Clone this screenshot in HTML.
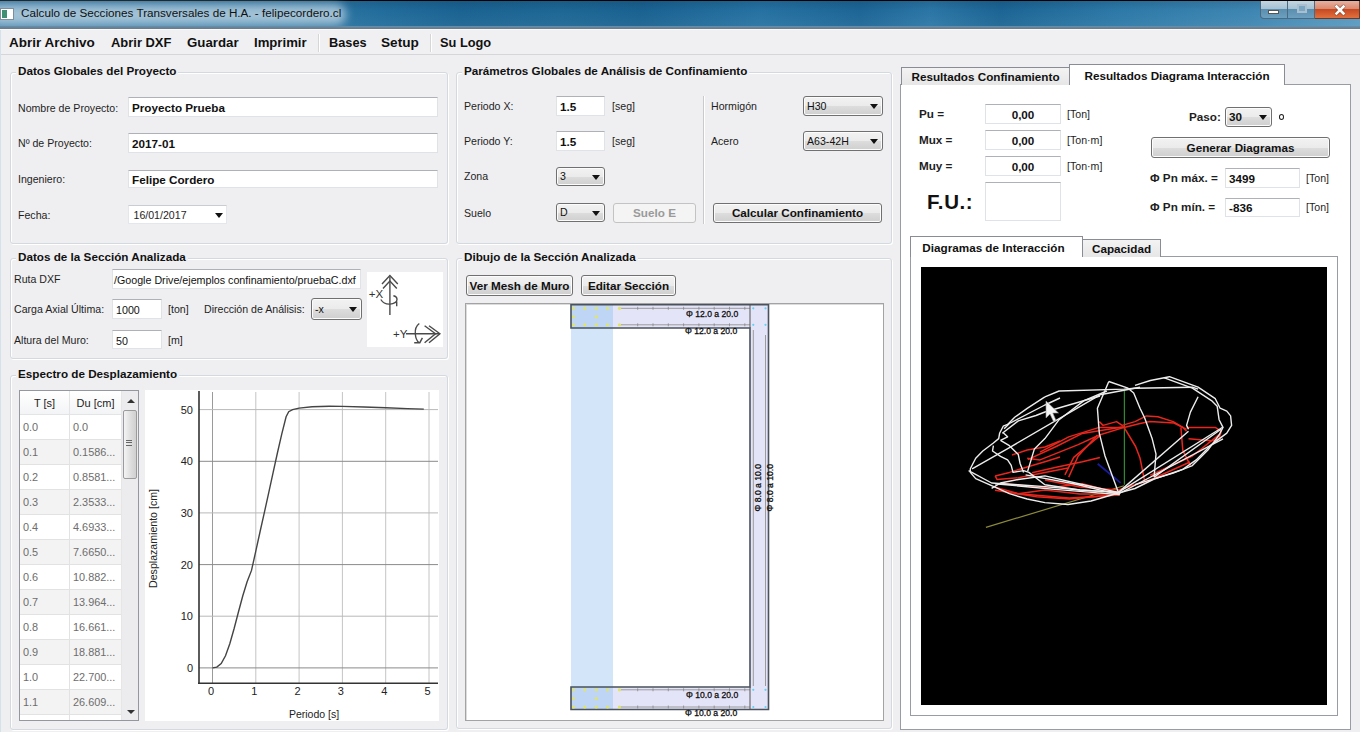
<!DOCTYPE html>
<html><head><meta charset="utf-8">
<style>
*{box-sizing:border-box;margin:0;padding:0}
html,body{width:1360px;height:732px;overflow:hidden;background:#efeff1;font-family:"Liberation Sans",sans-serif;color:#1e1e1e}
.a{position:absolute}
.t{position:absolute;white-space:nowrap;font-size:10.6px;line-height:16px;height:16px}
.b{font-weight:bold;font-size:11.7px}
.gb{position:absolute;border:1px solid #d3dadf;border-radius:3px;box-shadow:inset 1px 1px 0 #fff,1px 1px 0 #fff}
.gt{position:absolute;white-space:nowrap;font-weight:bold;font-size:11.7px;line-height:14px;padding:0 2px;background:#efeff1;color:#111}
.tb{position:absolute;background:#fff;border:1px solid #dfe3e8;border-top-color:#aeb1b6;font-size:11.7px;font-weight:bold;line-height:19px;padding-left:3px;white-space:nowrap;overflow:hidden;color:#111}
.btn{position:absolute;border:1px solid #707070;border-radius:3px;background:linear-gradient(#f2f2f2 0%,#ebebeb 50%,#dddddd 51%,#cfcfcf 100%);box-shadow:inset 0 0 0 1px #fcfcfc;font-weight:bold;font-size:11.7px;text-align:center;white-space:nowrap;color:#111}
.cb{position:absolute;border:1px solid #707070;border-radius:3px;background:linear-gradient(#f2f2f2 0%,#ebebeb 50%,#dddddd 51%,#cfcfcf 100%);box-shadow:inset 0 0 0 1px #fcfcfc;font-size:10.6px;padding-left:3px;white-space:nowrap;color:#111}
.cb:after{content:"";position:absolute;right:4.5px;top:50%;margin-top:-2px;border-left:4px solid transparent;border-right:4px solid transparent;border-top:5px solid #111}
.tab{position:absolute;border:1px solid #898c95;border-bottom:none;background:linear-gradient(#f3f3f3,#e6e6e6);font-weight:bold;font-size:11.7px;text-align:center;white-space:nowrap;color:#111}
</style></head><body>

<!-- TITLE BAR -->
<div class="a" style="left:0;top:0;width:1360px;height:30px;background:#000"></div>
<div class="a" style="left:0;top:1px;width:1360px;height:26px;background:linear-gradient(90deg,#3d80ab 0px,#2f77a3 300px,#226d9c 380px,#1b6392 460px,#1e6795 560px,#1a6291 640px,#2672a2 760px,#1d6696 860px,#2b76a6 930px,#1c6594 1000px,#2d79a8 1120px,#3e86b2 1250px,#5a9ac0 1360px)"></div>
<div class="a" style="left:0;top:1px;width:1360px;height:25px;background:linear-gradient(rgba(0,20,50,0.15),rgba(0,0,0,0) 40%,rgba(255,255,255,0.05))"></div>
<div class="a" style="left:-12px;top:4px;width:358px;height:21px;border-radius:10px;background:rgba(180,206,222,0.85);filter:blur(5px)"></div>
<div class="a" style="left:0;top:26px;width:1360px;height:1px;background:#5f8fae"></div>
<div class="a" style="left:0;top:27px;width:1360px;height:2px;background:linear-gradient(#6b8599,#6f7a84)"></div>
<div class="a" style="left:0;top:29px;width:1360px;height:1px;background:#fbfbfb"></div>
<!-- app icon -->
<div class="a" style="left:0;top:8px;width:14px;height:12px;background:#fff;border:1px solid #7d8f9c"></div>
<div class="a" style="left:2px;top:10px;width:5px;height:8px;background:#3f8f73"></div>
<div class="t" style="left:21px;top:5px;font-size:11.7px;color:#111">Calculo de Secciones Transversales de H.A. - felipecordero.cl</div>
<!-- window controls -->
<div class="a" style="left:1260px;top:1px;width:28px;height:18px;border:1px solid #4b6a80;border-top:none;border-radius:0 0 0 4px;background:linear-gradient(#c2d6e2 0%,#a7c2d3 45%,#5b8fb0 50%,#6d9fbe 100%)"></div>
<div class="a" style="left:1268px;top:10px;width:11px;height:4px;background:#fff;border:1px solid #555"></div>
<div class="a" style="left:1288px;top:1px;width:27px;height:18px;border:1px solid #4b6a80;border-top:none;border-left:none;background:linear-gradient(#c2d6e2 0%,#a7c2d3 45%,#5b8fb0 50%,#6d9fbe 100%)"></div>
<div class="a" style="left:1297px;top:4px;width:10px;height:9px;border:2px solid #a9bfcf;background:#7ba6c2"></div>
<div class="a" style="left:1315px;top:1px;width:45px;height:18px;border:1px solid #6a3a2a;border-top:none;border-left:none;background:linear-gradient(#e8b0a0 0%,#d98a70 45%,#c74a22 50%,#e2703e 100%)"></div>
<svg class="a" style="left:1330px;top:2px" width="20" height="15"><path d="M6.5 4.5 L13.5 11.5 M13.5 4.5 L6.5 11.5" stroke="#5a2a1a" stroke-width="4" stroke-linecap="round" opacity="0.5"/><path d="M6.5 4.5 L13.5 11.5 M13.5 4.5 L6.5 11.5" stroke="#fff" stroke-width="2.6" stroke-linecap="square"/></svg>

<!-- MENU BAR -->
<div class="a" style="left:0;top:30px;width:1360px;height:25px;background:#f0f0f2;border-bottom:1px solid #d5d6d9"></div>
<div class="t" style="top:34px;font-size:13.5px;font-weight:bold;line-height:17px;height:17px;left:9px;color:#111">Abrir Archivo</div>
<div class="t" style="top:34px;font-size:12.95px;font-weight:bold;line-height:17px;height:17px;left:111px;color:#111">Abrir DXF</div>
<div class="t" style="top:34px;font-size:13.25px;font-weight:bold;line-height:17px;height:17px;left:187px;color:#111">Guardar</div>
<div class="t" style="top:34px;font-size:13.15px;font-weight:bold;line-height:17px;height:17px;left:254px;color:#111">Imprimir</div>
<div class="a" style="left:318px;top:34px;width:1px;height:18px;background:#d6d6d6;box-shadow:1px 0 0 #fff"></div>
<div class="t" style="top:34px;font-size:12.75px;font-weight:bold;line-height:17px;height:17px;left:329px;color:#111">Bases</div>
<div class="t" style="top:34px;font-size:13.6px;font-weight:bold;line-height:17px;height:17px;left:381px;color:#111">Setup</div>
<div class="a" style="left:430px;top:34px;width:1px;height:18px;background:#d6d6d6;box-shadow:1px 0 0 #fff"></div>
<div class="t" style="top:34px;font-size:12.8px;font-weight:bold;line-height:17px;height:17px;left:440px;color:#111">Su Logo</div>

<!-- left window frame strip -->
<div class="a" style="left:0;top:30px;width:1px;height:702px;background:#d3e2ec"></div>

<!-- GROUP 1: Datos Globales del Proyecto -->
<div class="gb" style="left:10px;top:72px;width:438px;height:172px"></div>
<div class="gt" style="left:16px;top:64px">Datos Globales del Proyecto</div>
<div class="t" style="left:18px;top:100px">Nombre de Proyecto:</div>
<div class="tb" style="left:128px;top:97px;width:310px;height:20px">Proyecto Prueba</div>
<div class="t" style="left:18px;top:135px">Nº de Proyecto:</div>
<div class="tb" style="left:128px;top:133px;width:310px;height:20px">2017-01</div>
<div class="t" style="left:18px;top:171px">Ingeniero:</div>
<div class="tb" style="left:128px;top:170px;width:310px;height:18px;line-height:17px">Felipe Cordero</div>


<div class="t" style="left:18px;top:207px">Fecha:</div>
<div class="a" style="left:128px;top:205px;width:99px;height:19px;background:#fff;border:1px solid #e3e6ea;border-top-color:#c9ccd0"></div>
<div class="t" style="left:133.5px;top:207px">16/01/2017</div>
<div class="a" style="left:214.5px;top:213px;border-left:4px solid transparent;border-right:4px solid transparent;border-top:5px solid #111"></div>

<!-- GROUP 2: Parametros -->
<div class="gb" style="left:456px;top:72px;width:436px;height:172px"></div>
<div class="gt" style="left:462px;top:64px">Parámetros Globales de Análisis de Confinamiento</div>
<div class="t" style="left:464px;top:98px">Periodo X:</div>
<div class="tb" style="left:556px;top:96px;width:49px;height:20px">1.5</div>
<div class="t" style="left:612px;top:98px">[seg]</div>
<div class="t" style="left:464px;top:133px">Periodo Y:</div>
<div class="tb" style="left:556px;top:131px;width:49px;height:20px">1.5</div>
<div class="t" style="left:612px;top:133px">[seg]</div>
<div class="t" style="left:464px;top:168px">Zona</div>
<div class="cb" style="left:556px;top:167px;width:49px;height:19px;line-height:17px">3</div>
<div class="t" style="left:464px;top:205px">Suelo</div>
<div class="cb" style="left:556px;top:203px;width:49px;height:19px;line-height:17px">D</div>
<div class="btn" style="left:613px;top:203px;width:83px;height:20px;line-height:18px;border-color:#c3c3c3;background:#f4f4f4;box-shadow:none;color:#9a9a9a">Suelo E</div>
<div class="a" style="left:703px;top:96px;width:1px;height:128px;background:#c9cacc;box-shadow:1px 0 0 #fff"></div>
<div class="t" style="left:711px;top:98px">Hormigón</div>
<div class="cb" style="left:803px;top:96px;width:80px;height:20px;line-height:18px">H30</div>
<div class="t" style="left:711px;top:133px">Acero</div>
<div class="cb" style="left:803px;top:131px;width:80px;height:20px;line-height:18px">A63-42H</div>
<div class="btn" style="left:713px;top:203px;width:169px;height:20px;line-height:18px">Calcular Confinamiento</div>

<!-- GROUP 3: Datos de la Seccion -->
<div class="gb" style="left:10px;top:258px;width:438px;height:101px"></div>
<div class="gt" style="left:16px;top:250px">Datos de la Sección Analizada</div>
<div class="t" style="left:14px;top:271px">Ruta DXF</div>
<div class="tb" style="left:112px;top:269px;width:249px;height:20px;font-weight:normal;font-size:10.7px;padding-top:1px;padding-left:1px">/Google Drive/ejemplos confinamiento/pruebaC.dxf</div>
<div class="t" style="left:14px;top:301px">Carga Axial Última:</div>
<div class="tb" style="left:112px;top:299px;width:50px;height:20px;font-weight:normal;font-size:10.7px;padding-top:1px">1000</div>
<div class="t" style="left:168px;top:301px">[ton]</div>
<div class="t" style="left:204px;top:301px">Dirección de Análisis:</div>
<div class="cb" style="left:311px;top:298px;width:51px;height:22px;line-height:20px">-x</div>
<div class="t" style="left:14px;top:332px">Altura del Muro:</div>
<div class="tb" style="left:112px;top:330px;width:50px;height:19px;line-height:18px;font-weight:normal;font-size:10.7px;padding-top:1px">50</div>
<div class="t" style="left:168px;top:332px">[m]</div>
<div class="a" style="left:367px;top:272px;width:76px;height:75px;background:#fff"></div>
<svg class="a" style="left:367px;top:272px" width="76" height="75" viewBox="0 0 76 75" fill="none" stroke="#4a4a4a" stroke-width="1.4">
<path d="M22.9 43 V5"/>
<path d="M15 12 L22.9 3.5 L30.8 12 M16 16.5 L22.9 9 L29.8 16.5"/>
<path d="M13.8 27.5 C16 31 20 32.3 23 32.1 C27 32 30 30 30 27.5 C30 25.5 28 24 26.4 23.7 M29.7 29.5 V34.3"/>
<text x="1.8" y="25.6" font-size="11.5" fill="#333" stroke="none" font-family="Liberation Sans">+X</text>
<path d="M39 61.7 H72.5"/>
<path d="M62 53.7 L72.9 61.7 L62 70.7 M57.6 53.7 L68.5 61.7 L57.6 70.7"/>
<path d="M52.3 51.5 C49 54 48 58 48.3 61.7 C48.6 66 50 69 52 70.7 M47.2 70.7 H52.8 L55.4 65.8"/>
<text x="26" y="65.6" font-size="11.5" fill="#333" stroke="none" font-family="Liberation Sans">+Y</text>
</svg>

<!-- GROUP 4: Espectro -->
<div class="gb" style="left:10px;top:375px;width:438px;height:355px"></div>
<div class="gt" style="left:16px;top:367px">Espectro de Desplazamiento</div>


<!-- TABLE -->
<div class="a" style="left:19px;top:390px;width:120px;height:331px;background:#fff;border:1px solid #9297a0;overflow:hidden">
<div class="a" style="left:0;top:0;width:101px;height:24px;background:linear-gradient(#fff,#f3f4f6);border-bottom:1px solid #e3e4e6"></div>
<div class="a" style="left:49px;top:0;width:1px;height:24px;background:#e3e4e6"></div>
<div class="t" style="left:0;top:4px;width:49px;text-align:center;font-size:11px;color:#222">T [s]</div>
<div class="t" style="left:50px;top:4px;width:51px;text-align:center;font-size:11px;color:#222">Du [cm]</div>
<div class="a" style="left:0;top:24px;width:101px;height:25px;background:#fff;border-bottom:1px solid #e2e2e2"></div><div class="t" style="left:3px;top:28px;font-size:10.9px;color:#6d6d6d">0.0</div><div class="t" style="left:53px;top:28px;font-size:10.9px;color:#6d6d6d">0.0</div>
<div class="a" style="left:0;top:49px;width:101px;height:25px;background:#f3f3f3;border-bottom:1px solid #e2e2e2"></div><div class="t" style="left:3px;top:53px;font-size:10.9px;color:#6d6d6d">0.1</div><div class="t" style="left:53px;top:53px;font-size:10.9px;color:#6d6d6d">0.1586...</div>
<div class="a" style="left:0;top:74px;width:101px;height:25px;background:#fff;border-bottom:1px solid #e2e2e2"></div><div class="t" style="left:3px;top:78px;font-size:10.9px;color:#6d6d6d">0.2</div><div class="t" style="left:53px;top:78px;font-size:10.9px;color:#6d6d6d">0.8581...</div>
<div class="a" style="left:0;top:99px;width:101px;height:25px;background:#f3f3f3;border-bottom:1px solid #e2e2e2"></div><div class="t" style="left:3px;top:103px;font-size:10.9px;color:#6d6d6d">0.3</div><div class="t" style="left:53px;top:103px;font-size:10.9px;color:#6d6d6d">2.3533...</div>
<div class="a" style="left:0;top:124px;width:101px;height:25px;background:#fff;border-bottom:1px solid #e2e2e2"></div><div class="t" style="left:3px;top:128px;font-size:10.9px;color:#6d6d6d">0.4</div><div class="t" style="left:53px;top:128px;font-size:10.9px;color:#6d6d6d">4.6933...</div>
<div class="a" style="left:0;top:149px;width:101px;height:25px;background:#f3f3f3;border-bottom:1px solid #e2e2e2"></div><div class="t" style="left:3px;top:153px;font-size:10.9px;color:#6d6d6d">0.5</div><div class="t" style="left:53px;top:153px;font-size:10.9px;color:#6d6d6d">7.6650...</div>
<div class="a" style="left:0;top:174px;width:101px;height:25px;background:#fff;border-bottom:1px solid #e2e2e2"></div><div class="t" style="left:3px;top:178px;font-size:10.9px;color:#6d6d6d">0.6</div><div class="t" style="left:53px;top:178px;font-size:10.9px;color:#6d6d6d">10.882...</div>
<div class="a" style="left:0;top:199px;width:101px;height:25px;background:#f3f3f3;border-bottom:1px solid #e2e2e2"></div><div class="t" style="left:3px;top:203px;font-size:10.9px;color:#6d6d6d">0.7</div><div class="t" style="left:53px;top:203px;font-size:10.9px;color:#6d6d6d">13.964...</div>
<div class="a" style="left:0;top:224px;width:101px;height:25px;background:#fff;border-bottom:1px solid #e2e2e2"></div><div class="t" style="left:3px;top:228px;font-size:10.9px;color:#6d6d6d">0.8</div><div class="t" style="left:53px;top:228px;font-size:10.9px;color:#6d6d6d">16.661...</div>
<div class="a" style="left:0;top:249px;width:101px;height:25px;background:#f3f3f3;border-bottom:1px solid #e2e2e2"></div><div class="t" style="left:3px;top:253px;font-size:10.9px;color:#6d6d6d">0.9</div><div class="t" style="left:53px;top:253px;font-size:10.9px;color:#6d6d6d">18.881...</div>
<div class="a" style="left:0;top:274px;width:101px;height:25px;background:#fff;border-bottom:1px solid #e2e2e2"></div><div class="t" style="left:3px;top:278px;font-size:10.9px;color:#6d6d6d">1.0</div><div class="t" style="left:53px;top:278px;font-size:10.9px;color:#6d6d6d">22.700...</div>
<div class="a" style="left:0;top:299px;width:101px;height:25px;background:#f3f3f3;border-bottom:1px solid #e2e2e2"></div><div class="t" style="left:3px;top:303px;font-size:10.9px;color:#6d6d6d">1.1</div><div class="t" style="left:53px;top:303px;font-size:10.9px;color:#6d6d6d">26.609...</div>
<div class="a" style="left:49px;top:24px;width:1px;height:310px;background:#e2e2e2"></div>
<div class="a" style="left:101px;top:0;width:17px;height:329px;background:#ececee;border-left:1px solid #e6e6e6"></div>
<div class="a" style="left:107px;top:8px;border-left:4px solid transparent;border-right:4px solid transparent;border-bottom:4px solid #333"></div>
<div class="a" style="left:103px;top:19px;width:14px;height:69px;border:1px solid #9b9b9b;border-radius:2px;background:linear-gradient(90deg,#f4f4f4,#dcdcdc 60%,#d0d0d0)"></div>
<div class="a" style="left:106px;top:49px;width:6px;height:6px;border-top:1px solid #666;border-bottom:1px solid #666"></div>
<div class="a" style="left:106px;top:51px;width:6px;height:1px;background:#666"></div>
<div class="a" style="left:107px;top:319px;border-left:4px solid transparent;border-right:4px solid transparent;border-top:4px solid #333"></div>
</div>
<svg class="a" style="left:0;top:0" width="1360" height="732"><rect x="145" y="390" width="294" height="331" fill="#fff"/><line x1="212.5" y1="392" x2="212.5" y2="683" stroke="#9a9a9a" stroke-width="1"/><line x1="255.8" y1="392" x2="255.8" y2="683" stroke="#c4c4c4" stroke-width="1"/><line x1="299.1" y1="392" x2="299.1" y2="683" stroke="#c4c4c4" stroke-width="1"/><line x1="342.4" y1="392" x2="342.4" y2="683" stroke="#c4c4c4" stroke-width="1"/><line x1="385.7" y1="392" x2="385.7" y2="683" stroke="#c4c4c4" stroke-width="1"/><line x1="429.0" y1="392" x2="429.0" y2="683" stroke="#c4c4c4" stroke-width="1"/><line x1="199" y1="667.9" x2="438" y2="667.9" stroke="#8a8a8a" stroke-width="1"/><text x="193" y="671.9" text-anchor="end" font-size="11" fill="#222" font-family="Liberation Sans">0</text><line x1="199" y1="616.2" x2="438" y2="616.2" stroke="#b9b9b9" stroke-width="1"/><text x="193" y="620.2" text-anchor="end" font-size="11" fill="#222" font-family="Liberation Sans">10</text><line x1="199" y1="564.6" x2="438" y2="564.6" stroke="#8a8a8a" stroke-width="1"/><text x="193" y="568.6" text-anchor="end" font-size="11" fill="#222" font-family="Liberation Sans">20</text><line x1="199" y1="512.9" x2="438" y2="512.9" stroke="#b9b9b9" stroke-width="1"/><text x="193" y="516.9" text-anchor="end" font-size="11" fill="#222" font-family="Liberation Sans">30</text><line x1="199" y1="461.3" x2="438" y2="461.3" stroke="#8a8a8a" stroke-width="1"/><text x="193" y="465.3" text-anchor="end" font-size="11" fill="#222" font-family="Liberation Sans">40</text><line x1="199" y1="409.6" x2="438" y2="409.6" stroke="#b9b9b9" stroke-width="1"/><text x="193" y="413.6" text-anchor="end" font-size="11" fill="#222" font-family="Liberation Sans">50</text><text x="211.0" y="695" text-anchor="middle" font-size="11" fill="#222" font-family="Liberation Sans">0</text><text x="254.3" y="695" text-anchor="middle" font-size="11" fill="#222" font-family="Liberation Sans">1</text><text x="297.6" y="695" text-anchor="middle" font-size="11" fill="#222" font-family="Liberation Sans">2</text><text x="340.9" y="695" text-anchor="middle" font-size="11" fill="#222" font-family="Liberation Sans">3</text><text x="384.2" y="695" text-anchor="middle" font-size="11" fill="#222" font-family="Liberation Sans">4</text><text x="427.5" y="695" text-anchor="middle" font-size="11" fill="#222" font-family="Liberation Sans">5</text><line x1="199" y1="391" x2="199" y2="684" stroke="#333" stroke-width="1.6"/><line x1="198" y1="683.3" x2="438" y2="683.3" stroke="#333" stroke-width="1.6"/><polyline points="212.5,667.9 216.8,667.1 221.2,663.5 225.5,655.8 229.8,643.7 234.2,628.3 238.5,611.7 242.8,595.8 247.1,581.8 251.5,570.4 255.8,551.1 260.1,531.5 264.5,511.9 268.8,492.3 273.1,472.6 277.4,453.0 281.8,433.9 286.1,416.8 288.7,411.7 292.6,409.6 299.1,408.1 312.1,406.8 329.4,406.2 342.4,406.4 364.0,407.0 385.7,407.8 407.4,408.6 423.8,409.1" fill="none" stroke="#444" stroke-width="1.4"/><text x="314" y="718" text-anchor="middle" font-size="10.5" fill="#222" font-family="Liberation Sans">Periodo [s]</text><text transform="translate(157,538.5) rotate(-90)" text-anchor="middle" font-size="10.6" fill="#222" font-family="Liberation Sans">Desplazamiento [cm]</text></svg>
<!-- GROUP 5: Dibujo -->
<div class="gb" style="left:456px;top:258px;width:436px;height:471px"></div>
<div class="gt" style="left:462px;top:250px">Dibujo de la Sección Analizada</div>
<div class="btn" style="left:466px;top:275px;width:107px;height:21px;line-height:19px">Ver Mesh de Muro</div>
<div class="btn" style="left:581px;top:275px;width:95px;height:21px;line-height:19px">Editar Sección</div>
<div class="a" style="left:465px;top:303px;width:419px;height:418px;background:#fff;border:1px solid #a3a3a3;box-shadow:inset 1px 1px 0 #dcdcdc"></div>


<!-- SECTION DRAWING -->
<svg class="a" style="left:0;top:0" width="1360" height="732">
<rect x="571" y="305" width="42" height="405" fill="#d3e6f9"/>
<rect x="571" y="304.5" width="179" height="23.5" fill="#e4e4f8"/>
<rect x="571" y="304.5" width="42" height="23.5" fill="#bfd5f6"/>
<rect x="571" y="687" width="179" height="22.5" fill="#e4e4f8"/>
<rect x="571" y="687" width="42" height="22.5" fill="#bfd5f6"/>
<rect x="750" y="304.5" width="18.5" height="405" fill="#e4e4f8"/>
<path d="M571 304.8 H768.5 V709.5 H571 V687 H750 V328 H571 Z" fill="none" stroke="#4a525c" stroke-width="1.6"/>
<g stroke="#9a9a9a" stroke-width="1">
<line x1="620" y1="308.3" x2="750" y2="308.3"/><line x1="620" y1="324.8" x2="750" y2="324.8"/>
<line x1="620" y1="689.8" x2="750" y2="689.8"/><line x1="620" y1="707" x2="750" y2="707"/>
<line x1="753.3" y1="330" x2="753.3" y2="686"/><line x1="765.5" y1="335" x2="765.5" y2="686"/>
</g>
<g stroke="#888" stroke-width="0.8"><line x1="637.7" y1="306.8" x2="637.7" y2="309.8"/><line x1="637.7" y1="323.3" x2="637.7" y2="326.3"/><line x1="637.7" y1="688.3" x2="637.7" y2="691.3"/><line x1="637.7" y1="705.5" x2="637.7" y2="708.5"/><line x1="653.0" y1="306.8" x2="653.0" y2="309.8"/><line x1="653.0" y1="323.3" x2="653.0" y2="326.3"/><line x1="653.0" y1="688.3" x2="653.0" y2="691.3"/><line x1="653.0" y1="705.5" x2="653.0" y2="708.5"/><line x1="668.3" y1="306.8" x2="668.3" y2="309.8"/><line x1="668.3" y1="323.3" x2="668.3" y2="326.3"/><line x1="668.3" y1="688.3" x2="668.3" y2="691.3"/><line x1="668.3" y1="705.5" x2="668.3" y2="708.5"/><line x1="683.6" y1="306.8" x2="683.6" y2="309.8"/><line x1="683.6" y1="323.3" x2="683.6" y2="326.3"/><line x1="683.6" y1="688.3" x2="683.6" y2="691.3"/><line x1="683.6" y1="705.5" x2="683.6" y2="708.5"/><line x1="698.9" y1="306.8" x2="698.9" y2="309.8"/><line x1="698.9" y1="323.3" x2="698.9" y2="326.3"/><line x1="698.9" y1="688.3" x2="698.9" y2="691.3"/><line x1="698.9" y1="705.5" x2="698.9" y2="708.5"/><line x1="714.2" y1="306.8" x2="714.2" y2="309.8"/><line x1="714.2" y1="323.3" x2="714.2" y2="326.3"/><line x1="714.2" y1="688.3" x2="714.2" y2="691.3"/><line x1="714.2" y1="705.5" x2="714.2" y2="708.5"/><line x1="729.5" y1="306.8" x2="729.5" y2="309.8"/><line x1="729.5" y1="323.3" x2="729.5" y2="326.3"/><line x1="729.5" y1="688.3" x2="729.5" y2="691.3"/><line x1="729.5" y1="705.5" x2="729.5" y2="708.5"/><line x1="744.8" y1="306.8" x2="744.8" y2="309.8"/><line x1="744.8" y1="323.3" x2="744.8" y2="326.3"/><line x1="744.8" y1="688.3" x2="744.8" y2="691.3"/><line x1="744.8" y1="705.5" x2="744.8" y2="708.5"/></g><line x1="750" y1="304.5" x2="750" y2="328" stroke="#555" stroke-width="1"/><line x1="750" y1="687" x2="750" y2="709.5" stroke="#555" stroke-width="1"/>
<g fill="#e2e65c">
<circle cx="573.5" cy="308.3" r="1.5"/><circle cx="584.8" cy="308.3" r="1.5"/><circle cx="596.3" cy="308.3" r="1.5"/><circle cx="607.5" cy="308.3" r="1.5"/><circle cx="619.5" cy="308.3" r="1.6"/>
<circle cx="573.5" cy="324.8" r="1.5"/><circle cx="584.8" cy="324.8" r="1.5"/><circle cx="596.3" cy="324.8" r="1.5"/><circle cx="607.5" cy="324.8" r="1.5"/><circle cx="619.5" cy="324.8" r="1.6"/>
<circle cx="573.5" cy="316.8" r="1.5"/><circle cx="596.3" cy="316.8" r="1.5"/>
<circle cx="573.5" cy="689.8" r="1.5"/><circle cx="584.8" cy="689.8" r="1.5"/><circle cx="596.3" cy="689.8" r="1.5"/><circle cx="607.5" cy="689.8" r="1.5"/><circle cx="619.5" cy="689.8" r="1.6"/>
<circle cx="573.5" cy="707" r="1.5"/><circle cx="584.8" cy="707" r="1.5"/><circle cx="596.3" cy="707" r="1.5"/><circle cx="607.5" cy="707" r="1.5"/><circle cx="619.5" cy="707" r="1.6"/>
<circle cx="573.5" cy="698.5" r="1.5"/><circle cx="596.3" cy="698.5" r="1.5"/>
</g>
<g fill="#5fd3f0">
<circle cx="753.3" cy="308.3" r="1.1"/><circle cx="765.5" cy="308.3" r="1.1"/><circle cx="753.3" cy="324.8" r="1.1"/><circle cx="765.5" cy="324.8" r="1.1"/>
<circle cx="753.3" cy="689.8" r="1.1"/><circle cx="765.5" cy="689.8" r="1.1"/><circle cx="753.3" cy="707" r="1.1"/><circle cx="765.5" cy="707" r="1.1"/>
</g>
<g font-family="Liberation Sans" font-size="8.6" fill="#111" stroke="#111" stroke-width="0.3">
<text x="686" y="316.5">Φ 12.0 a 20.0</text>
<text x="685" y="334.3">Φ 12.0 a 20.0</text>
<text x="686" y="698.3">Φ 10.0 a 20.0</text>
<text x="685" y="715.6">Φ 10.0 a 20.0</text>
<text transform="translate(761.3,511.5) rotate(-90)">Φ 8.0 a 10.0</text>
<text transform="translate(773,511.5) rotate(-90)">Φ 8.0 a 10.0</text>
</g>
</svg>

<!-- RIGHT TAB WIDGET -->
<div class="a" style="left:900px;top:84px;width:451px;height:646px;background:#fff;border:1px solid #9a9ca4"></div>
<div class="tab" style="left:901px;top:67px;width:169px;height:18px;line-height:17px">Resultados Confinamiento</div>
<div class="tab" style="left:1069px;top:64px;width:216px;height:21px;line-height:22px;background:#fff">Resultados Diagrama Interacción</div>


<div class="t b" style="left:919px;top:106px;font-size:11.7px">Pu =</div>
<div class="tb" style="left:985px;top:104px;width:76px;height:20px;text-align:center;padding:0">0,00</div>
<div class="t" style="left:1067px;top:106px">[Ton]</div>
<div class="t b" style="left:919px;top:132px">Mux =</div>
<div class="tb" style="left:985px;top:130px;width:76px;height:20px;text-align:center;padding:0">0,00</div>
<div class="t" style="left:1067px;top:132px">[Ton·m]</div>
<div class="t b" style="left:919px;top:158px">Muy =</div>
<div class="tb" style="left:985px;top:156px;width:76px;height:20px;text-align:center;padding:0">0,00</div>
<div class="t" style="left:1067px;top:158px">[Ton·m]</div>
<div class="t" style="left:927px;top:189px;font-size:20.5px;font-weight:bold;line-height:26px;height:26px;color:#111;letter-spacing:0.6px">F.U.:</div>
<div class="tb" style="left:985px;top:182px;width:76px;height:39px"></div>
<div class="t b" style="left:1189px;top:109px">Paso:</div>
<div class="cb" style="left:1225px;top:107px;width:47px;height:20px;line-height:18px;font-weight:bold;font-size:11.7px">30</div>
<div class="a" style="left:1278.5px;top:113.5px;width:5.5px;height:6px;border:1.6px solid #222;border-radius:50%"></div>
<div class="btn" style="left:1151px;top:137px;width:179px;height:21px;line-height:19px">Generar Diagramas</div>
<div class="t b" style="left:1150px;top:170px">Φ Pn máx. =</div>
<div class="tb" style="left:1225px;top:168px;width:75px;height:20px">3499</div>
<div class="t" style="left:1306px;top:170px">[Ton]</div>
<div class="t b" style="left:1150px;top:199px">Φ Pn mín. =</div>
<div class="tb" style="left:1225px;top:198px;width:75px;height:19px;line-height:18px">-836</div>
<div class="t" style="left:1306px;top:199px">[Ton]</div>

<!-- inner tabs -->
<div class="a" style="left:910px;top:256px;width:428px;height:460px;background:#fff;border:1px solid #9a9ca4"></div>
<div class="tab" style="left:1082px;top:239px;width:79px;height:18px;line-height:17px">Capacidad</div>
<div class="tab" style="left:910px;top:236px;width:173px;height:21px;line-height:21px;background:#fff;text-indent:-6px">Diagramas de Interacción</div>
<div class="a" style="left:921px;top:267px;width:406px;height:438px;background:#000"></div>

<svg class="a" style="left:0;top:0" width="1360" height="732"><polyline points="985.9,527.4 1124,485.8" fill="none" stroke="#8c8a3a" stroke-width="1.2"/><polyline points="1097.7,463.7 1120.6,482.9" fill="none" stroke="#1a1aa0" stroke-width="1.8"/><polyline points="1124.4,391 1124.4,484.8" fill="none" stroke="#2f8a2f" stroke-width="1.2"/><polyline points="1099.3,421.6 1103.1,425.4 1116.5,421.6 1122.2,425.4 1135,421.6 1146.5,415.9 1157.9,416.8 1173.2,421.6 1182.8,427.4 1186.6,431.2" fill="none" stroke="#e8261c" stroke-width="1.5" stroke-linejoin="round"/><polyline points="1040,452.2 1068.7,436.9 1099.3,427.4 1124.1,427.4 1140,423.5 1150,421.5 1174,423 1180,426 1186.6,429.3" fill="none" stroke="#e8261c" stroke-width="1.5" stroke-linejoin="round"/><polyline points="1027.2,458.2 1040,459.9 1078.2,444.6 1099.3,435 1124.1,427.4" fill="none" stroke="#e8261c" stroke-width="1.5" stroke-linejoin="round"/><polyline points="1068.7,477.1 1078.2,456 1097.4,435" fill="none" stroke="#e8261c" stroke-width="1.5" stroke-linejoin="round"/><polyline points="1124.1,427.4 1135.6,446.5 1140,458 1144.6,480.9" fill="none" stroke="#e8261c" stroke-width="1.5" stroke-linejoin="round"/><polyline points="1186.6,427.4 1215.3,427.4 1221,431.2 1219.1,438.8 1211.5,440.7 1188.5,438.8" fill="none" stroke="#e8261c" stroke-width="1.5" stroke-linejoin="round"/><polyline points="1180.9,427.4 1182.8,450.3 1190.4,465.6" fill="none" stroke="#e8261c" stroke-width="1.5" stroke-linejoin="round"/><polyline points="1150.3,475.2 1192.4,456 1221,433.1" fill="none" stroke="#e8261c" stroke-width="1.5" stroke-linejoin="round"/><polyline points="995.2,475.9 1009.4,472.4 1027.2,467 1044.9,461.7 1060,457" fill="none" stroke="#e8261c" stroke-width="1.5" stroke-linejoin="round"/><polyline points="995.2,475.9 997,479.5 1018.3,477.7 1044.9,472.4 1068,468" fill="none" stroke="#e8261c" stroke-width="1.5" stroke-linejoin="round"/><polyline points="993.4,486.6 1018.3,493.7 1044.9,490.1 1080,494 1118.4,494" fill="none" stroke="#e8261c" stroke-width="1.5" stroke-linejoin="round"/><polyline points="1012,455 1027.2,450 1044.9,447 1060,441" fill="none" stroke="#e8261c" stroke-width="1.5" stroke-linejoin="round"/><polyline points="1044.9,480 1080,487 1118.4,490 1150,480 1190,462" fill="none" stroke="#e8261c" stroke-width="1.5" stroke-linejoin="round"/><polyline points="995.0,490.2 1036.5,496.8 1069.3,499.0 1119.6,494.6" fill="none" stroke="#e8261c" stroke-width="1.5" stroke-linejoin="round"/><polyline points="1014.6,493.5 1069.3,497.9 1119.6,495.0" fill="none" stroke="#e8261c" stroke-width="1.5" stroke-linejoin="round"/><polyline points="1027.8,459.6 1056.2,446.5 1082.4,433.4 1123.9,426.8" fill="none" stroke="#e8261c" stroke-width="1.5" stroke-linejoin="round"/><polyline points="1064.9,474.9 1073.7,457.4 1099.9,435.6" fill="none" stroke="#e8261c" stroke-width="1.5" stroke-linejoin="round"/><polyline points="1032.1,472.7 1056.2,467.3 1082.4,461.8 1099.9,457.4" fill="none" stroke="#e8261c" stroke-width="1.5" stroke-linejoin="round"/><polyline points="1003.7,483.7 1047.4,488.0 1082.4,483.7 1119.6,493.5" fill="none" stroke="#e8261c" stroke-width="1.5" stroke-linejoin="round"/><polyline points="995.0,483.7 1051.8,489.1 1119.6,494.6" fill="none" stroke="#ececec" stroke-width="1.4" stroke-linejoin="round"/><polyline points="1025.6,474.9 1073.7,483.7 1119.6,494.6" fill="none" stroke="#ececec" stroke-width="1.4" stroke-linejoin="round"/><polyline points="1044.9,396.9 1027.2,408.4 1014.7,417.3 1007.6,424.4 1003.2,426.2 999.6,433.3 998.7,438.6 993.4,443 982.8,451 975.7,458.2 970.3,468.8 970.3,472.4 975.7,478.6 989.9,484.8 1009.4,493.7 1027.2,499 1044.9,502.6 1068,504.5 1091,501 1118.4,493 1135,488.5 1154.1,479 1182.8,469.4 1196.2,459.9 1211.5,444.6 1226.8,433.1 1231.6,425.4 1230.6,415.9 1226.8,411.1 1220.1,408.2 1215.3,398.7 1198.1,387.2 1169.4,376.7 1150.3,380.5 1135,385.3" fill="none" stroke="#ececec" stroke-width="1.4" stroke-linejoin="round"/><polyline points="1044.9,396.9 1059.1,391 1124.1,389.1 1135,388.2 1192.4,387.2 1198.1,389.1" fill="none" stroke="#ececec" stroke-width="1.4" stroke-linejoin="round"/><polyline points="1163.7,377.6 1192.4,388.2 1211.5,400.6 1217.2,406.3 1219.1,419.7 1223,427.4 1219.1,435 1207.7,450.3 1192.4,465.6 1173.2,473.2 1135,484.7" fill="none" stroke="#ececec" stroke-width="1.4" stroke-linejoin="round"/><polyline points="972.1,468.8 1011.2,446.6 1100,394.8 1140,387.2" fill="none" stroke="#ececec" stroke-width="1.4" stroke-linejoin="round"/><polyline points="1002.3,433.3 1018.3,420.9 1036,415.5 1044.9,412 1100,396" fill="none" stroke="#ececec" stroke-width="1.4" stroke-linejoin="round"/><polyline points="1004.1,428.8 1009.4,423.5 1044.9,405 1060,398" fill="none" stroke="#ececec" stroke-width="1.4" stroke-linejoin="round"/><polyline points="1000.5,440.4 1007.6,436.8 1003,432.5" fill="none" stroke="#ececec" stroke-width="1.4" stroke-linejoin="round"/><polyline points="1027.6,471.4 1034.4,448.9 1044.9,438.6 1059.1,419.7 1084,400.6 1106.9,391" fill="none" stroke="#ececec" stroke-width="1.4" stroke-linejoin="round"/><polyline points="993.4,445.7 992.5,451 1000.5,456.4 1007.6,459.9 1011.2,465.3 1013,472.4 1023.6,470.6 1028.9,472.4 1044.9,484.8 1080,490 1118.4,492.4" fill="none" stroke="#ececec" stroke-width="1.4" stroke-linejoin="round"/><polyline points="1000.5,440.4 1009.4,445.7 1018.3,454.6 1020.1,463.5 1023.6,472.4" fill="none" stroke="#ececec" stroke-width="1.4" stroke-linejoin="round"/><polyline points="968.6,470.6 991.6,483 1018.3,484.8 1044.9,486.6 1080,490 1118.4,492.4" fill="none" stroke="#ececec" stroke-width="1.4" stroke-linejoin="round"/><polyline points="991.6,488.3 1000.5,483 1018.3,479.5 1044.9,475.9 1080,484 1118.4,492.4" fill="none" stroke="#ececec" stroke-width="1.4" stroke-linejoin="round"/><polyline points="1108.8,381.5 1106.5,387 1097.4,408.2 1099.3,433.1 1105,456 1118.4,492.4" fill="none" stroke="#ececec" stroke-width="1.4" stroke-linejoin="round"/><polyline points="1108.8,381.5 1128,388.2 1133.7,393 1140,408.2 1144.6,417.8 1152.2,438.8 1156,454.1 1154.1,477.1" fill="none" stroke="#ececec" stroke-width="1.4" stroke-linejoin="round"/><polyline points="1198.1,396.8 1190.4,412.1 1186.6,425.4 1188.5,429.3" fill="none" stroke="#ececec" stroke-width="1.4" stroke-linejoin="round"/><polyline points="1118.4,492.4 1188.5,431.2" fill="none" stroke="#ececec" stroke-width="1.4" stroke-linejoin="round"/><polyline points="1118.4,492.4 1223,427" fill="none" stroke="#ececec" stroke-width="1.4" stroke-linejoin="round"/><polyline points="1154.1,477.1 1221,429.3" fill="none" stroke="#ececec" stroke-width="1.4" stroke-linejoin="round"/><polyline points="1118.4,494 1223,438.8" fill="none" stroke="#ececec" stroke-width="1.4" stroke-linejoin="round"/><path d="M1046 401 L1046 418 L1050 414 L1053.5 421.5 L1056 420.5 L1052.8 413 L1058.5 413 Z" fill="#f4f4f4" stroke="#999" stroke-width="0.6"/></svg>
</body></html>
